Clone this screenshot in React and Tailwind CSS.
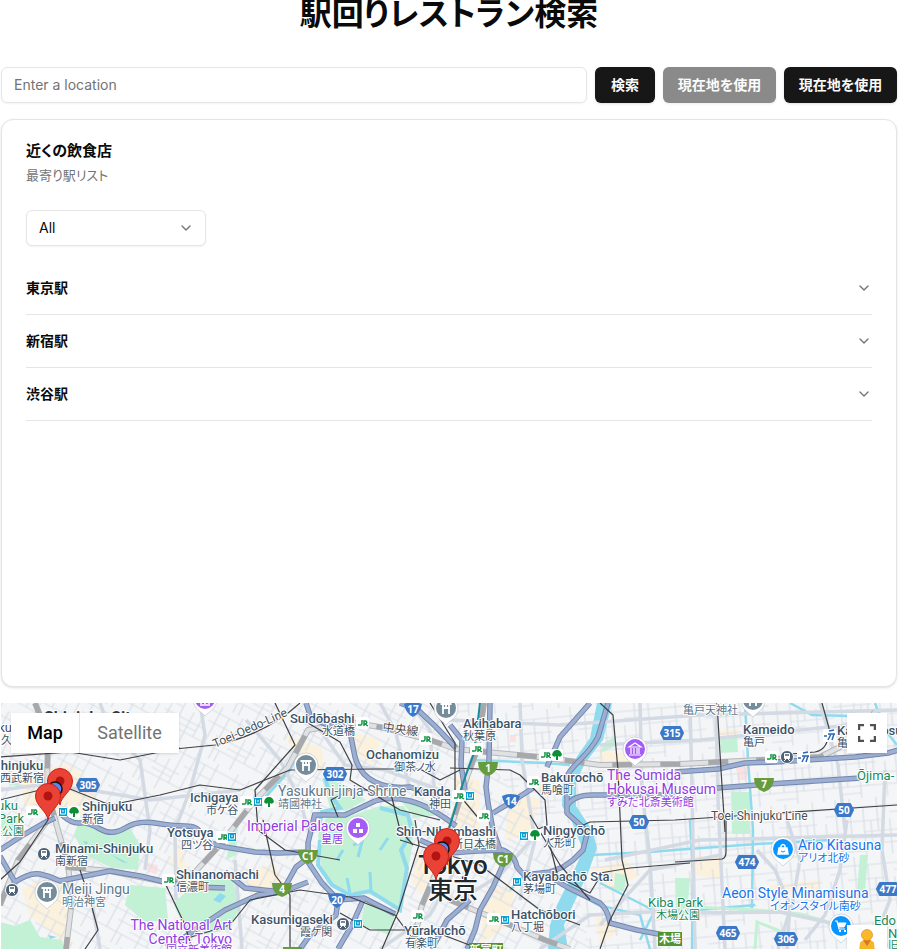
import React from "react";
import { ChevronDown } from "lucide-react";

const STATIONS = ["東京駅", "新宿駅", "渋谷駅"];

const HIGHWAYS = [
  "M0 856 15 882Q30 872 40 874T60 881L85 876 110 871 140 876 165 882 195 887 225 888",
  "M0 850 20 837 42 824 55 818",
  "M62 815Q72 824 80 823T100 829 125 828 155 823 185 826 200 833",
  "M306 703 311 718 330 726 345 726 351 737 355 757Q360 775 375 782T410 787L440 797",
  "M400 703 418 710 436 727 456 748",
  "M313 815 345 815 375 801Q390 796 410 801T456 826",
  "M315 813 308 843 308 862 322 883 338 900 364 898 395 914",
  "M210 843 225 847 255 852 278 853 308 852",
  "M180 940 225 910 258 895 282 892 308 882",
  "M225 872 245 888 282 892",
  "M282 892 296 867 308 858",
  "M364 898 352 925 338 949",
  "M338 900 336 915 310 935 300 949",
  "M490 703 489 760 486 787 488 803 493 830 500 850",
  "M420 840 450 853 477 851 503 850Q515 855 517 867L524 875 550 872 563 867 573 860 583 850 588 830",
  "M505 860 493 887 480 910 475 930 467 949",
  "M524 873 550 877 567 887 583 895 600 903Q608 910 610 923L637 930 680 938",
  "M608 703 598 737Q592 748 580 760T567 777L567 813 588 832",
  "M567 806Q573 795 593 795L680 795",
  "M590 703 560 737 547 767",
  "M493 813 513 801 533 788",
  "M675 772 718 769 745 763 775 762 855 757 888 753 898 750",
  "M717 788 770 784 860 778",
  "M450 725 462 740 461 765 465 790",
  "M432 949 447 920 470 900",
];

const ARTERIALS = [
  "M200 703 205 735 190 790 175 830 176 900",
  "M100 703 110 730 140 760 150 830 145 870",
  "M0 790 40 785 90 790 150 800 240 790",
  "M246 720 280 760 300 800 308 830",
  "M320 730 345 765 385 770 440 790",
  "M380 703 395 730 410 790",
  "M520 703 522 760 535 840 520 900",
  "M450 720 560 725 700 715 897 710",
  "M640 703 642 790 650 860 655 949",
  "M690 703 692 790 695 949",
  "M716 703 718 800 725 949",
  "M600 745 700 740 850 725",
  "M605 860 700 840 897 835",
  "M690 913 780 912 840 925 897 949",
  "M757 850 775 870 790 905 787 949",
  "M787 820 800 860 793 900 778 949",
  "M847 820 840 870 825 915 805 940",
  "M820 703 838 765 845 830",
  "M885 770 882 850 890 900 870 949",
  "M540 949 590 915 690 910",
  "M600 925 650 870 720 855",
  "M235 860 242 949",
  "M380 949 430 915 455 870",
  "M90 890 100 949",
  "M410 703 430 730 435 800",
  "M540 830 500 875 460 900",
];

const METRO = [
  "M165 750 215 745Q265 735 300 703",
  "M303 720 340 742 352 765 350 780 400 810 440 820",
  "M0 757 70 752 120 760 180 748",
  "M0 800 60 785 110 805 160 795 200 785 240 790 290 770 375 769 420 769 440 780 460 770",
  "M430 703 455 743 455 790 480 820",
  "M275 703 295 745 255 790 258 830 285 850 340 860",
  "M263 820 275 875 290 895 290 949",
  "M338 817 331 800 350 790 390 790 400 830 413 845",
  "M450 768 510 770 520 775 545 800 547 825 520 838",
  "M600 703 613 715 618 770 622 860 628 885 610 920 600 949",
  "M550 840 590 822 675 820 750 815 897 805",
  "M548 838 558 877 590 893 598 880 600 873 630 868 690 863",
  "M675 862 722 859Q726 858 726 852L726 820",
  "M717 703 721 770 725 832",
  "M822 703 829 728Q829 750 815 752L790 754",
  "M400 840 480 865 500 880 540 910 580 925",
  "M415 820 419 845 398 912 382 949",
  "M80 870 90 900 98 930 85 949",
  "M165 883 185 925 192 949",
  "M165 945 230 925 250 900 300 890 350 897 395 915 420 949",
  "M340 913 370 930 430 930 480 949",
  "M0 880 20 862 48 820",
  "M530 815 560 865 590 900",
];

const CANALS = [
  "M470 760 545 763 570 765",
  "M745 703 748 760 753 830 752 908",
  "M675 850 757 844 830 840",
  "M690 820 693 875 692 949",
  "M592 855 650 852 675 850",
  "M675 912 755 905",
  "M600 883 655 911",
  "M567 887 598 905 640 915 650 949",
  "M790 703 812 715 850 716",
  "M875 703 885 730 897 745",
  "M510 890 530 870",
  "M655 910 640 940",
];

const RAILS = [
  "M35 703 48 735 47 790 58 830 68 865 72 900 66 949",
  "M66 867 110 871 165 882 195 872 220 845 255 800 288 767 308 730 350 722 385 728 430 740 456 749 540 757 600 765 680 764 760 760 820 757 850 742 875 712",
  "M484 703 477 750 467 777 450 830 437 870 422 905 412 949",
  "M0 905 18 860 48 820",
  "M450 900 510 925 545 940 570 949",
];

const PARKS = [
  "M78 823 100 830 130 828 140 845 138 870 112 868 85 855 74 835Z",
  "M173 903 200 880 232 878 240 905 230 930 200 935 183 925Z",
  "M130 885 165 888 168 920 145 922 125 905Z",
  "M0 922 15 926 30 920 40 937 62 940 64 949 0 949Z",
  "M322 778 345 785 366 800 345 811 330 808Z",
  "M318 835 326 818 350 816 380 806 404 806 415 825 410 860 400 908 366 893 340 892 322 872Z",
  "M400 800 428 803 440 815 415 818Z",
  "M366 902 395 915 390 935 360 925Z",
  "M675 878 690 878 687 915 676 915Z",
  "M615 873 626 875 624 892 614 890Z",
  "M731 792 750 792 750 834 732 834Z",
  "M720 739 737 737 738 752 721 753Z",
  "M605 742 616 736 616 746 600 753Z",
  "M860 855 868 855 865 890 857 892Z",
  "M8 770 22 775 20 787 8 784Z",
  "M226 860 232 830 238 825 236 855Z",
  "M0 815 18 818 18 834 0 835Z",
];

const CREAM = [
  "M22 890 38 880 70 887 71 949 60 940 30 915Z",
  "M20 770 70 765 100 790 80 815 25 812Z",
  "M285 735 322 748 325 770 300 765Z",
  "M418 850 445 860 420 895 412 880Z",
  "M455 775 480 780 480 835 450 835Z",
  "M510 790 540 800 530 835 505 840Z",
  "M485 890 515 885 510 925 480 945Z",
  "M590 870 625 860 640 875 610 892Z",
  "M595 915 620 930 600 945Z",
  "M600 750 640 755 638 765 598 762Z",
  "M690 855 725 858 720 880 695 875Z",
  "M770 885 820 880 820 892 770 895Z",
  "M718 730 738 729 738 738 719 739Z",
  "M242 870 275 865 285 885 250 895Z",
  "M345 730 380 740 375 765 355 755Z",
  "M180 895 170 860 180 840 190 880Z",
];

const DARK = "#3c5368";
const GREEN = "#188a5b";
const PURPLE = "#8f3ce0";
const BLUE = "#1a73e8";
const SLATE = "#60798b";

// [x, baseline, colour, size, name, Japanese name, x of the Japanese name]
const LABELS = [
  [290, 723, DARK, 13, "Suidōbashi", "水道橋", 322],
  [463, 728, DARK, 13, "Akihabara", "秋葉原", 463],
  [366, 759, DARK, 13, "Ochanomizu", "御茶ノ水", 394],
  [414, 796, DARK, 13, "Kanda", "神田", 429],
  [541, 782, DARK, 13, "Bakurochō", "馬喰町", 541],
  [543, 835, DARK, 13, "Ningyōchō", "人形町", 543],
  [396, 836, DARK, 13, "Shin-Nihombashi", "新日本橋", 452],
  [523, 881, DARK, 13, "Kayabachō Sta.", "茅場町", 523],
  [511, 919, DARK, 13, "Hatchōbori", "八丁堀", 511],
  [404, 935, DARK, 13, "Yūrakuchō", "有楽町", 405],
  [251, 924, DARK, 13, "Kasumigaseki", "霞ケ関", 300],
  [176, 879, DARK, 13, "Shinanomachi", "信濃町", 176],
  [167, 837, DARK, 13, "Yotsuya", "四ツ谷", 181],
  [190, 802, DARK, 13, "Ichigaya", "市ケ谷", 206],
  [82, 811, DARK, 13, "Shinjuku", "新宿", 82],
  [55, 853, DARK, 13, "Minami-Shinjuku", "南新宿", 55],
  [-7, 770, DARK, 13, "Shinjuku", "西武新宿", 0],
  [743, 734, DARK, 13, "Kameido", "亀戸", 743],
  [837, 735, DARK, 13, "Kameidosuijin", "亀戸水神", 837],
  [278, 796, SLATE, 14, "Yasukuni-jinja Shrine", "靖國神社", 278],
  [62, 894, SLATE, 14, "Meiji Jingu", "明治神宮", 62],
  [247, 831, PURPLE, 14, "Imperial Palace", "皇居", 321],
  [798, 850, BLUE, 14, "Ario Kitasuna", "アリオ北砂", 798],
  [722, 898, BLUE, 14, "Aeon Style Minamisuna", "イオンスタイル南砂", 770],
  [648, 907, GREEN, 13, "Kiba Park", "木場公園", 656],
];

const HEXES = [[88, 785, "305"], [335, 774, "302"], [672, 733, "315"], [639, 822, "50"], [844, 810, "50"], [747, 862, "474"], [888, 889, "477"], [728, 933, "465"], [786, 939, "306"]];
const BLUE_SHIELDS = [[413, 709, "17"], [511, 801, "14"], [337, 900, "20"]];
const GREEN_SHIELDS = [[488, 768, "1"], [308, 856, "C1"], [282, 889, "4"], [764, 784, "7"], [503, 859, "C1"]];
const JR = [[32, 812], [362, 723], [425, 739], [476, 749], [545, 755], [533, 782], [458, 796], [483, 816], [246, 802], [222, 837], [168, 880], [417, 916], [493, 919], [771, 757]];
const METRO_SIGNS = [[63, 812], [258, 802], [232, 837], [470, 796], [524, 836], [517, 882], [505, 920], [358, 924]];
const TREES = [[74, 812], [269, 802], [557, 755], [535, 835]];
const STOPS = [[44, 854], [12, 890], [343, 924], [787, 757]];

function Halo({ x, y, size, fill, anchor, weight, children }) {
  return (
    <text x={x} y={y} fontSize={size} fill={fill} textAnchor={anchor} fontWeight={weight} stroke="#ffffff" strokeWidth="2" strokeLinejoin="round" paintOrder="stroke">
      {children}
    </text>
  );
}

function Poi({ x, y, color, children }) {
  return (
    <g transform={`translate(${x} ${y})`}>
      <path d="M0 16C-3 12-12 9-12-1A12 12 0 0 1 12-1C12 9 3 12 0 16Z" fill="#fff" stroke="#b8bec5" strokeWidth=".6" />
      <circle cy="-1" r="10" fill={color} />
      <g fill="none" stroke="#fff" strokeWidth="1.5">{children}</g>
    </g>
  );
}

const Torii = () => <path d="M-5.500-5H5.500M-4-1H4M-3-5V5M3-5V5M0-5V-1" strokeWidth="1.800" />;

function Pin({ x, y }) {
  return (
    <g transform={`translate(${x} ${y})`}>
      <path d="M0 24C-1 15-12.500 10-12.500 0A12.500 12.500 0 0 1 12.500 0C12.500 10 1 15 0 24Z" fill="#ea4335" stroke="#c5221f" strokeWidth="1" />
      <circle r="4.500" fill="#b31412" />
    </g>
  );
}

function MapDrawing() {
  return (
    <svg className="block size-full" viewBox="1 703 896 246" preserveAspectRatio="xMinYMin slice" role="img" aria-label="Map" fontFamily="Roboto, 'Noto Sans CJK JP', sans-serif">
      <defs>
        <pattern id="blocks" width="64" height="58" patternUnits="userSpaceOnUse" patternTransform="rotate(-5)">
          <path d="M0 9H64M0 23H38M20 34H64M0 46H64M8 0V46M21 9V58M35 0V34M47 23V58M58 0V46M0 53H21M47 16H64M28 23V46M8 40H35" fill="none" stroke="#d9dfe7" strokeWidth="1.200" />
        </pattern>
        <pattern id="lanes" width="58" height="52" patternUnits="userSpaceOnUse" patternTransform="rotate(28)">
          <path d="M0 7H58M0 18H30M14 28H58M0 40H58M7 0V40M18 7V52M30 0V28M42 18V52M52 0V40M30 34H52M24 40V52" fill="none" stroke="#d9dfe7" strokeWidth="1.200" />
        </pattern>
      </defs>
      <rect x="0" y="703" width="900" height="246" fill="#f4f5f7" />
      <g fill="#fbf1dd">{CREAM.map((d) => <path key={d} d={d} />)}</g>
      <g fill="#fde1e0">
        <path d="M736 768 748 766 747 780 738 780ZM147 863 158 865 157 874 148 872ZM510 735 516 735 516 742 510 742Z" />
      </g>
      <path d="M440 703H900V949H590L570 850 520 800Z" fill="url(#blocks)" />
      <path d="M0 703H440L520 800 570 850 590 949H0Z" fill="url(#lanes)" />
      <g fill="#c3f1d5">{PARKS.map((d) => <path key={d} d={d} />)}</g>
      <g fill="#90daee">
        <path d="M597 703 612 703 603 740 585 763 576 782 576 806 592 830 597 848 588 873 573 905 564 925 568 949 548 949 550 925 557 905 573 873 583 850 572 822 562 806 563 780 578 755 590 738Z" />
        <path d="M110 854 118 858 128 863 122 862ZM83 841 88 842 86 845ZM213 900 220 893 226 896 220 903ZM48 935 57 937 50 939Z" />
      </g>
      <g fill="none" stroke="#90daee" strokeWidth="4">
        <path d="M318 832 322 812 340 808 330 794 325 778M320 840 318 865 332 885 350 895 370 891 400 910 407 868 401 850 412 832 408 815 380 808" />
        <path d="M337 860 343 850M353 845 362 842 358 857M380 850 388 838M347 878 350 893M370 872 371 891" strokeWidth="3" />
        <path d="M308 730 290 770 258 805" strokeWidth="3" />
        <g strokeWidth="2.500">{CANALS.map((d) => <path key={d} d={d} />)}</g>
      </g>
      <path d="M695 907 755 910 800 914 825 921 845 935M755 949 757 922 790 935" fill="none" stroke="#c3f1d5" strokeWidth="3" />
      <g fill="none" stroke="#d3dae3" strokeWidth="3.500" strokeLinejoin="round">{ARTERIALS.map((d) => <path key={d} d={d} />)}</g>
      <g fill="none" strokeLinejoin="round">
        {RAILS.map((d) => (
          <g key={d}>
            <path d={d} stroke="#b5b8bb" strokeWidth="6" />
            <path d={d} stroke="#dfe1e3" strokeWidth="4" />
            <path d={d} stroke="#a6a8ab" strokeWidth="5" strokeDasharray="20 28" />
          </g>
        ))}
      </g>
      <g fill="none" stroke="#7386b0" strokeWidth="5.500" strokeLinejoin="round">{HIGHWAYS.map((d) => <path key={d} d={d} />)}</g>
      <g fill="none" stroke="#9dafd0" strokeWidth="3.500" strokeLinejoin="round">{HIGHWAYS.map((d) => <path key={d} d={d} />)}</g>
      <g fill="none" stroke="#3f4145" strokeWidth="1.200" strokeLinejoin="round">{METRO.map((d) => <path key={d} d={d} />)}</g>
      <path d="M480 703 474 753 463 783 448 832" fill="none" stroke="#178b9b" strokeWidth="2" />

      {JR.map(([x, y]) => (
        <g key={`${x}-${y}`}>
          <rect x={x - 6} y={y - 6} width="13" height="12" rx="2" fill="#fff" />
          <path d={`M${x - 4} ${y + 2}H${x - 1}Q${x} ${y + 2} ${x} ${y}V${y - 3}M${x + 2} ${y + 3}V${y - 2}H${x + 4}Q${x + 6} ${y} ${x + 3} ${y + 1}L${x + 6} ${y + 3}`} fill="none" stroke="#149447" strokeWidth="1.500" />
        </g>
      ))}
      {METRO_SIGNS.map(([x, y]) => (
        <g key={`${x}-${y}`}>
          <rect x={x - 4.5} y={y - 4.5} width="9" height="9" rx="1" fill="#0a9fd1" stroke="#fff" />
          <path d={`M${x - 2.5} ${y - 2.5}V${y + 2}H${x + 2.5}V${y - 2.5}M${x - 1} ${y - 1}H${x + 1}`} fill="none" stroke="#fff" />
        </g>
      ))}
      {TREES.map(([x, y]) => (
        <g key={`${x}-${y}`}>
          <rect x={x - 6} y={y - 6} width="12" height="12" rx="2" fill="#fff" />
          <path d={`M${x - 5} ${y}Q${x - 4} ${y - 5} ${x} ${y - 5}T${x + 5} ${y}Q${x + 3} ${y + 3} ${x + 1} ${y + 1}V${y + 5}H${x - 1}V${y + 1}Q${x - 3} ${y + 3} ${x - 5} ${y}Z`} fill="#0c8f36" />
        </g>
      ))}
      {STOPS.map(([x, y]) => (
        <g key={`${x}-${y}`}>
          <circle cx={x} cy={y} r="6.500" fill="#4a6076" stroke="#fff" />
          <rect x={x - 3} y={y - 4} width="6" height="6" rx="1" fill="#fff" />
          <path d={`M${x - 2} ${y - 2}H${x + 2}`} stroke="#4a6076" strokeWidth="1.500" />
          <path d={`M${x - 3} ${y + 4}L${x - 1} ${y + 2}M${x + 3} ${y + 4}L${x + 1} ${y + 2}`} stroke="#fff" />
        </g>
      ))}
      {[[829, 735], [803, 757]].map(([x, y]) => (
        <g key={x}>
          <rect x={x - 6} y={y - 6} width="13" height="13" rx="2" fill="#fff" />
          <path d={`M${x - 5} ${y + 1}H${x - 2}M${x} ${y - 4}L${x + 5} ${y - 5}M${x - 1} ${y - 1}H${x + 6}M${x + 2} ${y - 1}L${x - 1} ${y + 5}M${x + 5} ${y - 1}L${x + 3} ${y + 5}`} fill="none" stroke="#2a67b2" strokeWidth="1.500" />
        </g>
      ))}

      <g fontFamily="'Noto Sans', sans-serif" fontSize="10" fontWeight="700" fill="#fff" textAnchor="middle">
        {HEXES.map(([x, y, n]) => {
          const w = n.length > 2 ? 11 : 9;
          return (
            <g key={`${x}-${y}`}>
              <path d={`M${x - w + 3} ${y - 6}H${x + w - 3}L${x + w} ${y}L${x + w - 3} ${y + 6}H${x - w + 3}L${x - w} ${y}Z`} fill="#3c78c8" stroke="#3c78c8" strokeWidth="2" strokeLinejoin="round" />
              <text x={x} y={y + 4}>{n}</text>
            </g>
          );
        })}
        {BLUE_SHIELDS.map(([x, y, n]) => (
          <g key={n}>
            <path d={`M${x - 9} ${y - 5}Q${x} ${y - 9} ${x + 9} ${y - 5}Q${x + 7} ${y + 5} ${x} ${y + 8}Q${x - 7} ${y + 5} ${x - 9} ${y - 5}Z`} fill="#3c78c8" />
            <text x={x} y={y + 4}>{n}</text>
          </g>
        ))}
        {GREEN_SHIELDS.map(([x, y, n]) => (
          <g key={`${x}-${y}`}>
            <path d={`M${x - 10} ${y - 6}H${x + 10}Q${x + 10} ${y + 5} ${x} ${y + 8}Q${x - 10} ${y + 5} ${x - 10} ${y - 6}Z`} fill="#669b3e" />
            <text x={x} y={y + 4}>{n}</text>
          </g>
        ))}
      </g>
      <rect x="283" y="947" width="19" height="8" fill="#669b3e" />
      <g fontSize="11" fontWeight="700" fill="#fff" textAnchor="middle">
        <rect x="658" y="932" width="24" height="14" fill="#52932f" />
        <text x="670" y="943">木場</text>
        <rect x="469" y="943" width="34" height="14" fill="#52932f" />
        <text x="486" y="954">新富町</text>
      </g>

      <Poi x={306} y={766} color="#758d9b"><Torii /></Poi>
      <Poi x={446} y={709} color="#758d9b"><Torii /></Poi>
      <Poi x={753} y={701} color="#758d9b"><Torii /></Poi>
      <Poi x={47} y={893} color="#758d9b"><Torii /></Poi>
      <Poi x={358} y={829} color="#a45cf4">
        <path d="M-2-6H2V-2H-2ZM-5 0H-1V4H-5ZM1 0H5V4H1Z" fill="#fff" stroke="none" />
      </Poi>
      <Poi x={205} y={700} color="#a45cf4"><path d="M-5 5H5M-4 1V4M0 1V4M4 1V4" /></Poi>
      <Poi x={635} y={750} color="#a45cf4">
        <path d="M-6-3 0-7 6-3ZM-6 5H6M-4-2V4M-1-2V4M2-2V4M4-2V4" strokeWidth="1.200" />
      </Poi>
      <Poi x={783} y={850} color="#0a94ff">
        <path d="M-4-2H4L5 4H-5Z" fill="#fff" />
        <path d="M-2-2V-4Q0-7 2-4V-2" />
        <path d="M-2 1Q0 3 2 1" stroke="#0a94ff" strokeWidth="1" />
      </Poi>
      <Poi x={841} y={927} color="#0a94ff">
        <path d="M-3-4H5L3 0H-2Z" fill="#fff" strokeWidth="1" />
        <path d="M-6-6H-4L-2 2H4" strokeWidth="1.200" />
        <path d="M-2 4H0M3 4H5" strokeWidth="2" />
      </Poi>

      {LABELS.map(([x, y, fill, size, name, ja, jaX]) => (
        <g key={`${name}-${x}`}>
          <Halo x={jaX} y={y + 12} size={11} fill={fill}>{ja}</Halo>
          <Halo x={x} y={y} size={size} fill={fill} weight={fill === DARK ? 500 : 400}>{name}</Halo>
        </g>
      ))}
      <Halo x={607} y={780} size={14} fill={PURPLE}>The Sumida</Halo>
      <Halo x={607} y={794} size={14} fill={PURPLE}>Hokusai Museum</Halo>
      <Halo x={607} y={806} size={11} fill={PURPLE}>すみだ北斎美術館</Halo>
      <Halo x={232} y={930} size={14} fill={PURPLE} anchor="end">The National Art</Halo>
      <Halo x={232} y={944} size={14} fill={PURPLE} anchor="end">Center, Tokyo</Halo>
      <Halo x={232} y={954} size={11} fill={PURPLE} anchor="end">国立新美術館</Halo>
      <Halo x={683} y={714} size={11} fill={SLATE}>亀戸天神社</Halo>
      <Halo x={857} y={780} size={13} fill={GREEN}>Ōjima-</Halo>
      <Halo x={874} y={925} size={13} fill={GREEN}>Edo</Halo>
      <Halo x={888} y={938} size={13} fill={GREEN}>N</Halo>
      <Halo x={888} y={949} size={11} fill={GREEN}>旧</Halo>
      <Halo x={18} y={810} size={13} fill={GREEN} anchor="end">Shinjuku</Halo>
      <Halo x={24} y={823} size={13} fill={GREEN} anchor="end">Park</Halo>
      <Halo x={24} y={835} size={11} fill={GREEN} anchor="end">中央公園</Halo>
      <Halo x={12} y={732} size={13} fill={DARK} anchor="end">Ōku</Halo>
      <Halo x={12} y={744} size={11} fill={DARK} anchor="end">大久</Halo>
      <Halo x={44} y={723} size={16} fill="#333b45" weight={700}>Shinjuku City</Halo>
      <Halo x={711} y={820} size={12} fill="#4a4f55">Toei Shinjuku Line</Halo>
      <g transform="rotate(8 382 731)">
        <Halo x={382} y={731} size={12} fill="#4a4f55">中央線</Halo>
      </g>
      <g transform="rotate(-24 215 748)">
        <Halo x={215} y={748} size={12} fill="#4a4f55">Toei-Oedo-Line</Halo>
      </g>
      <Halo x={453} y={874} size={26} fill="#20262c" weight={500} anchor="middle">Tokyo</Halo>
      <Halo x={453} y={899} size={25} fill="#20262c" weight={500} anchor="middle">東京</Halo>

      <Pin x={60} y={781} />
      <circle cx="55" cy="789" r="7" fill="#5a86f5" stroke="#111" strokeWidth="1.500" />
      <Pin x={48} y={796} />
      <Pin x={447} y={841} />
      <circle cx="442" cy="849" r="7" fill="#5a86f5" stroke="#111" strokeWidth="1.500" />
      <Pin x={436} y={856} />
    </svg>
  );
}

function SearchBar() {
  const button = "h-9 shrink-0 rounded-md bg-[#171717] pb-px text-center text-sm font-bold text-neutral-50 shadow-sm";
  return (
    <form className="flex gap-2" onSubmit={(e) => e.preventDefault()}>
      <input aria-label="Enter a location" placeholder="Enter a location" className="h-9 min-w-0 flex-1 rounded-md border border-neutral-200 px-3 pb-0.5 text-sm shadow-xs outline-none placeholder:text-neutral-500" />
      <button type="submit" className={`${button} w-[60px]`}>検索</button>
      <button type="button" disabled className={`${button} w-[113px] opacity-50`}>現在地を使用</button>
      <button type="button" className={`${button} w-[113px]`}>現在地を使用</button>
    </form>
  );
}

function NearbyCard() {
  return (
    <section className="mt-4 rounded-xl border border-neutral-200 bg-white p-6 shadow-sm">
      <h2 className="text-[15px] leading-[14px] font-bold">近くの飲食店</h2>
      <p className="mt-1.5 text-[13px] leading-[22px] text-neutral-500">最寄り駅リスト</p>
      <div className="relative mt-6 w-[180px]">
        <select aria-label="Genre" className="block h-9 w-full appearance-none rounded-md border border-neutral-200 bg-white px-3 text-sm shadow-xs">
          <option>All</option>
        </select>
        <ChevronDown className="pointer-events-none absolute top-2.5 right-3 size-4 text-neutral-500" />
      </div>
      <div className="mt-4 h-[400px] overflow-y-auto">
        {STATIONS.map((name) => (
          <h3 key={name} className="border-b border-neutral-200">
            <button type="button" aria-expanded="false" className="flex w-full items-center justify-between py-4 text-left text-sm font-bold">
              {name}
              <ChevronDown className="size-4 text-neutral-500" />
            </button>
          </h3>
        ))}
      </div>
    </section>
  );
}

function MapPanel() {
  return (
    <section className="relative mt-4 min-h-0 flex-1 overflow-hidden bg-gray-100 font-[Roboto,sans-serif]">
      <MapDrawing />
      <div className="absolute top-2.5 left-2.5 flex h-10 bg-white text-lg shadow-sm">
        <button type="button" className="w-[68px] text-center font-medium text-black">Map</button>
        <button type="button" className="w-[100px] border-l border-neutral-200 text-center text-neutral-500">Satellite</button>
      </div>
      <button type="button" aria-label="Toggle fullscreen view" className="absolute top-2.5 right-2.5 flex size-10 items-center justify-center bg-white text-neutral-600 shadow-sm">
        <svg viewBox="0 0 18 18" className="size-[18px]" fill="none" stroke="currentColor" strokeWidth="2.500">
          <path d="M1 6V1H6M12 1H17V6M17 12V17H12M6 17H1V12" />
        </svg>
      </button>
      <button type="button" aria-label="Street View" className="absolute right-2.5 -bottom-4 flex size-10 justify-center bg-white pt-1 shadow-sm">
        <svg viewBox="0 0 20 32" className="h-8 w-5">
          <path d="M3 14Q4 11 10 11T17 14L18 23H15L14 32H6L5 23H2Z" fill="#f4b62b" />
          <path d="M6 11 10 17 14 11Z" fill="#e0741c" />
          <circle cx="10" cy="6" r="5.500" fill="#f9b92d" stroke="#d98f15" strokeWidth=".7" />
        </svg>
      </button>
    </section>
  );
}

export default function App() {
  return (
    <main className="flex h-screen flex-col overflow-hidden bg-white pr-5 pl-px font-[Inter,'Noto_Sans_CJK_JP',sans-serif] text-neutral-950 [font-feature-settings:'palt']">
      <h1 className="mb-10 text-center text-[32px] leading-[27px] font-bold">駅回りレストラン検索</h1>
      <SearchBar />
      <NearbyCard />
      <MapPanel />
    </main>
  );
}
